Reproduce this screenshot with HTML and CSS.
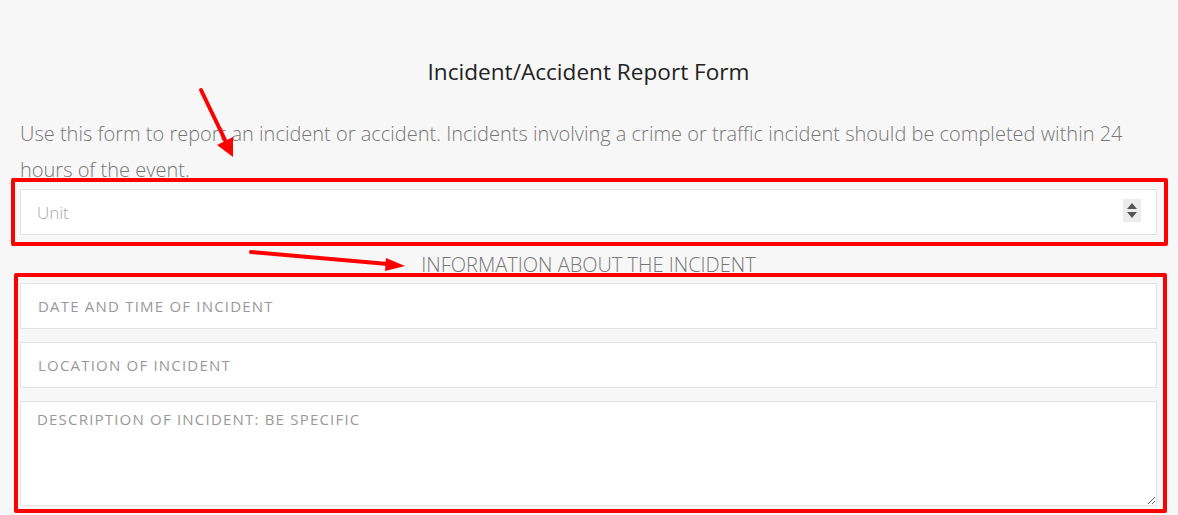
FILE: index.html
```html
<!doctype html>
<html>
  <head>
    <title>Incident/Accident Report Form</title>
    <link rel="stylesheet" href="styles.css">
  </head>
  <body>
    <div class="page">
      <h1 class="title">Incident/Accident Report Form</h1>
      <p class="intro">
        Use this form to report an incident or accident. Incidents involving a crime or traffic incident should be completed within 24 hours of the event.
      </p>

      <div class="field-wrap">
        <input class="field unit" type="number" placeholder="Unit">
        <span class="spinner">
          <svg width="18" height="23" viewBox="0 0 18 23">
            <path d="M4 10 L9 4 L14 10 Z" fill="#555"/>
            <path d="M4 13 L9 19 L14 13 Z" fill="#555"/>
          </svg>
        </span>
      </div>

      <h2 class="section">INFORMATION ABOUT THE INCIDENT</h2>

      <div class="fields">
        <input class="field caps" type="text" placeholder="DATE AND TIME OF INCIDENT">
        <input class="field caps" type="text" placeholder="LOCATION OF INCIDENT">
        <textarea class="field caps area" placeholder="DESCRIPTION OF INCIDENT: BE SPECIFIC"></textarea>
      </div>
    </div>

    <!-- annotation overlay -->
    <div class="mark mark-unit"></div>
    <div class="mark mark-info"></div>
    <svg class="arrows" width="1178" height="515" viewBox="0 0 1178 515">
      <line x1="201" y1="90" x2="226" y2="142" stroke="#f00" stroke-width="4" stroke-linecap="round"/>
      <path d="M217 145 L233 157 L233 137 Z" fill="#f00"/>
      <line x1="251" y1="252" x2="388" y2="264" stroke="#f00" stroke-width="4" stroke-linecap="round"/>
      <path d="M386 258 L405 266 L385 271 Z" fill="#f00"/>
    </svg>
  </body>
</html>
```

FILE: styles.css
```css
body {
  margin: 0;
  background: #f7f7f7;
  font-family: "Open Sans", "Liberation Sans", sans-serif;
  position: relative;
  height: 515px;
  overflow: hidden;
}
.page {
  padding: 57px 21px 0 20px;
}
.title {
  margin: 0;
  font-size: 22.6px;
  font-weight: 400;
  line-height: 30px;
  text-align: center;
  color: #222;
}
.intro {
  margin: 29px 0 0;
  font-size: 20px;
  font-weight: 300;
  line-height: 36px;
  color: #777;
}
.field-wrap {
  position: relative;
  margin-top: 1px;
}
.field {
  display: block;
  box-sizing: border-box;
  width: 100%;
  height: 46px;
  margin: 0;
  border: 1px solid #e3e3e3;
  background: #fff;
  font-family: "Open Sans", "Liberation Sans", sans-serif;
  outline: none;
}
.unit {
  padding: 0 16px;
  font-size: 17px;
  font-weight: 300;
  -moz-appearance: textfield;
}
.unit::-webkit-inner-spin-button,
.unit::-webkit-outer-spin-button {
  -webkit-appearance: none;
  margin: 0;
}
.unit::placeholder {
  color: #a8a8a8;
}
.spinner {
  position: absolute;
  right: 16px;
  top: 10px;
  width: 18px;
  height: 23px;
  background: #ececec;
}
.spinner svg {
  display: block;
}
.section {
  margin: 12px 0 0;
  font-size: 20px;
  font-weight: 300;
  line-height: 36px;
  text-align: center;
  color: #777;
}
.fields {
  display: flex;
  flex-direction: column;
  gap: 13px;
}
.caps {
  padding: 0 17px;
  font-size: 15px;
  letter-spacing: 1.2px;
}
.caps::placeholder {
  color: #999;
}
.area {
  height: 105px;
  padding-top: 7px;
  padding-left: 16px;
  resize: vertical;
}
.mark {
  position: absolute;
  border: 4px solid #f00;
  border-radius: 2px;
  box-sizing: border-box;
}
.mark-unit {
  left: 11px;
  top: 178px;
  width: 1157px;
  height: 68px;
}
.mark-info {
  left: 14px;
  top: 273px;
  width: 1153px;
  height: 240px;
}
.arrows {
  position: absolute;
  left: 0;
  top: 0;
}
```
